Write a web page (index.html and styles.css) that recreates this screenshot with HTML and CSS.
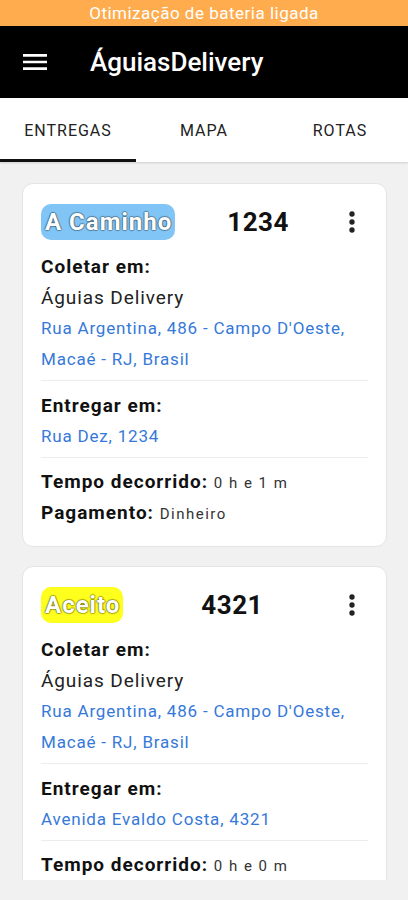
FILE: index.html
```html
<!DOCTYPE html>
<html lang="pt-BR">
<head>
  <meta charset="UTF-8">
  <meta name="viewport" content="width=device-width, initial-scale=1.0">
  <title>ÁguiasDelivery</title>
  <link rel="stylesheet" href="styles.css">
</head>
<body>
  <div class="app">
    <div class="battery">Otimização de bateria ligada</div>

    <header class="toolbar">
      <svg class="menu" viewBox="0 0 24 24" width="32" height="32">
        <path fill="#fff" d="M3 18h18v-2H3v2zm0-5h18v-2H3v2zm0-7v2h18V6H3z"/>
      </svg>
      <h1>ÁguiasDelivery</h1>
    </header>

    <nav class="tabs">
      <div class="tab active">Entregas</div>
      <div class="tab">Mapa</div>
      <div class="tab">Rotas</div>
    </nav>

    <main class="list">
      <div class="card">
        <div class="card-head">
          <span class="status caminho">A Caminho</span>
          <span class="number">1234</span>
          <svg class="more" viewBox="0 0 24 24" width="32" height="32">
            <circle cx="12" cy="6" r="2"/>
            <circle cx="12" cy="12" r="2"/>
            <circle cx="12" cy="18" r="2"/>
          </svg>
        </div>
        <div class="section">
          <div class="label">Coletar em:</div>
          <div class="place">Águias Delivery</div>
          <div class="address">Rua Argentina, 486 - Campo D'Oeste, Macaé - RJ, Brasil</div>
        </div>
        <div class="section">
          <div class="label">Entregar em:</div>
          <div class="address">Rua Dez, 1234</div>
        </div>
        <div class="section last">
          <div class="label">Tempo decorrido: <span class="value">0 h e 1 m</span></div>
          <div class="label">Pagamento: <span class="value">Dinheiro</span></div>
        </div>
      </div>

      <div class="card">
        <div class="card-head">
          <span class="status aceito">Aceito</span>
          <span class="number">4321</span>
          <svg class="more" viewBox="0 0 24 24" width="32" height="32">
            <circle cx="12" cy="6" r="2"/>
            <circle cx="12" cy="12" r="2"/>
            <circle cx="12" cy="18" r="2"/>
          </svg>
        </div>
        <div class="section">
          <div class="label">Coletar em:</div>
          <div class="place">Águias Delivery</div>
          <div class="address">Rua Argentina, 486 - Campo D'Oeste, Macaé - RJ, Brasil</div>
        </div>
        <div class="section">
          <div class="label">Entregar em:</div>
          <div class="address">Avenida Evaldo Costa, 4321</div>
        </div>
        <div class="section last">
          <div class="label">Tempo decorrido: <span class="value">0 h e 0 m</span></div>
          <div class="label">Pagamento: <span class="value">Dinheiro</span></div>
        </div>
      </div>
    </main>
  </div>
</body>
</html>
```

FILE: styles.css
```css
*{
  box-sizing: border-box;
  margin: 0;
  padding: 0;
}
body{
  font-family: Roboto, "Noto Sans", sans-serif;
  background: #f1f1f1;
  color: #111;
}
.app{
  display: flex;
  flex-direction: column;
  height: 900px;
  padding-bottom: 20px;
}
.battery{
  height: 26px;
  background: #ffac4e;
  color: #fff;
  font-size: 17px;
  letter-spacing: .5px;
  line-height: 26px;
  text-align: center;
}
.toolbar{
  height: 72px;
  background: #000;
  display: flex;
  align-items: center;
  padding-left: 19px;
}
.toolbar h1{
  color: #fff;
  font-size: 26px;
  font-weight: 500;
  margin-left: 39px;
}
.tabs{
  height: 64px;
  display: flex;
  background: #fff;
  box-shadow: 0 1px 2px rgba(0,0,0,.15);
  position: relative;
}
.tab{
  flex: 1;
  display: flex;
  align-items: center;
  justify-content: center;
  text-transform: uppercase;
  font-size: 16px;
  letter-spacing: 1px;
  color: #222;
  border-bottom: 3px solid transparent;
  padding-top: 3px;
}
.tab.active{
  border-bottom-color: #111;
}

.list{
  flex: 1;
  overflow: hidden;
  padding: 21px 21px 0 22px;
}
.card{
  background: #fff;
  border: 1px solid #e4e4e4;
  border-radius: 11px;
  padding: 19px 18px 17px 18px;
  margin-bottom: 19px;
}
.card-head{
  display: flex;
  align-items: center;
  height: 37px;
  margin-bottom: 2px;
}
.status{
  color: #fff;
  font-size: 24px;
  font-weight: 700;
  letter-spacing: 1px;
  border-radius: 10px;
  padding: 0 3px 0 4px;
  line-height: 36px;
  text-shadow: -1px 0 1px rgba(0,0,0,.3), 1px 0 1px rgba(0,0,0,.3), 0 -1px 1px rgba(0,0,0,.3), 0 1px 1px rgba(0,0,0,.3);
}
.status.caminho{
  background: #80c5f5;
}
.status.aceito{
  background: #ffff1e;
}
.number{
  flex: 1;
  text-align: center;
  font-size: 26px;
  font-weight: 700;
  letter-spacing: .5px;
  padding-left: 5px;
}
.more{
  fill: #222;
}
.section{
  padding: 10px 0 5px;
  border-bottom: 1px solid #ececec;
}
.section.last{
  border-bottom: none;
  padding: 9px 0 0;
}
.label{
  font-size: 19px;
  font-weight: 700;
  letter-spacing: 1px;
  line-height: 30px;
}
.place{
  font-size: 19px;
  letter-spacing: .9px;
  line-height: 31px;
  color: #222;
}
.address{
  font-size: 17px;
  letter-spacing: .8px;
  line-height: 31px;
  color: #3679d9;
}
.value{
  font-size: 15px;
  font-weight: 400;
  color: #333;
  letter-spacing: 1.5px;
}
```
